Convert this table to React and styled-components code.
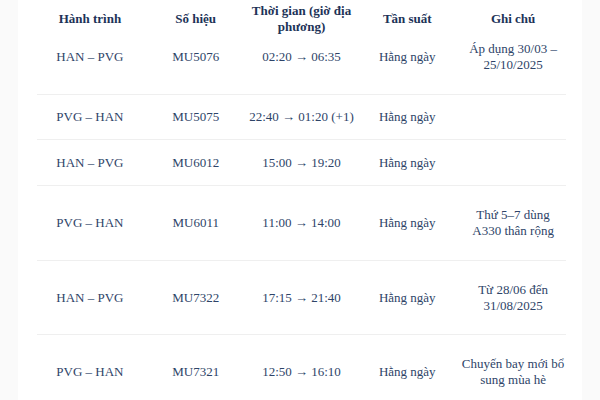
import React from "react";
import styled, { createGlobalStyle } from "styled-components";

const GlobalStyle = createGlobalStyle`
  html, body {
    margin: 0;
    padding: 0;
    background: #fafafa;
  }
  body {
    font-family: "Liberation Serif", "Times New Roman", serif;
  }
`;

const Page = styled.div`
  width: 600px;
  height: 400px;
  overflow: hidden;
  display: flex;
  justify-content: center;
  background: #fafafa;
`;

const Card = styled.div`
  width: 564px;
  background: #ffffff;
  padding: 0 16px 0 19px;
  box-sizing: border-box;
`;

const Row = styled.div`
  display: grid;
  grid-template-columns: repeat(5, 1fr);
  align-items: center;
  padding: ${(p) => p.$top}px 0 ${(p) => p.$bottom}px;
  border-bottom: ${(p) => (p.$head ? "none" : "1px solid #efefef")};
`;

const Head = styled.div`
  font-size: 13px;
  line-height: 16px;
  font-weight: bold;
  color: #1d3358;
  text-align: center;
  white-space: nowrap;
`;

const Cell = styled.div`
  font-size: 13px;
  line-height: 16px;
  color: #2e4468;
  text-align: center;
  white-space: nowrap;
`;

const rows = [
  ["HAN – PVG", "MU5076", "02:20 → 06:35", "Hằng ngày", ["Áp dụng 30/03 –", "25/10/2025"], 4, 21],
  ["PVG – HAN", "MU5075", "22:40 → 01:20 (+1)", "Hằng ngày", [], 14, 14],
  ["HAN – PVG", "MU6012", "15:00 → 19:20", "Hằng ngày", [], 15, 14],
  ["PVG – HAN", "MU6011", "11:00 → 14:00", "Hằng ngày", ["Thứ 5–7 dùng", "A330 thân rộng"], 21, 21],
  ["HAN – PVG", "MU7322", "17:15 → 21:40", "Hằng ngày", ["Từ 28/06 đến", "31/08/2025"], 21, 20],
  ["PVG – HAN", "MU7321", "12:50 → 16:10", "Hằng ngày", ["Chuyến bay mới bổ", "sung mùa hè"], 21, 21],
];

export default function App() {
  return (
    <>
      <GlobalStyle />
      <Page>
        <Card>
          <Row $head $top={3} $bottom={2}>
            <Head>Hành trình</Head>
            <Head>Số hiệu</Head>
            <Head>
              Thời gian (giờ địa
              <br />
              phương)
            </Head>
            <Head>Tần suất</Head>
            <Head>Ghi chú</Head>
          </Row>
          {rows.map(([route, code, time, freq, note, top, bottom]) => (
            <Row key={code} $top={top} $bottom={bottom}>
              <Cell>{route}</Cell>
              <Cell>{code}</Cell>
              <Cell>{time}</Cell>
              <Cell>{freq}</Cell>
              <Cell>
                {note.map((line, i) => (
                  <React.Fragment key={i}>
                    {i > 0 && <br />}
                    {line}
                  </React.Fragment>
                ))}
              </Cell>
            </Row>
          ))}
        </Card>
      </Page>
    </>
  );
}
